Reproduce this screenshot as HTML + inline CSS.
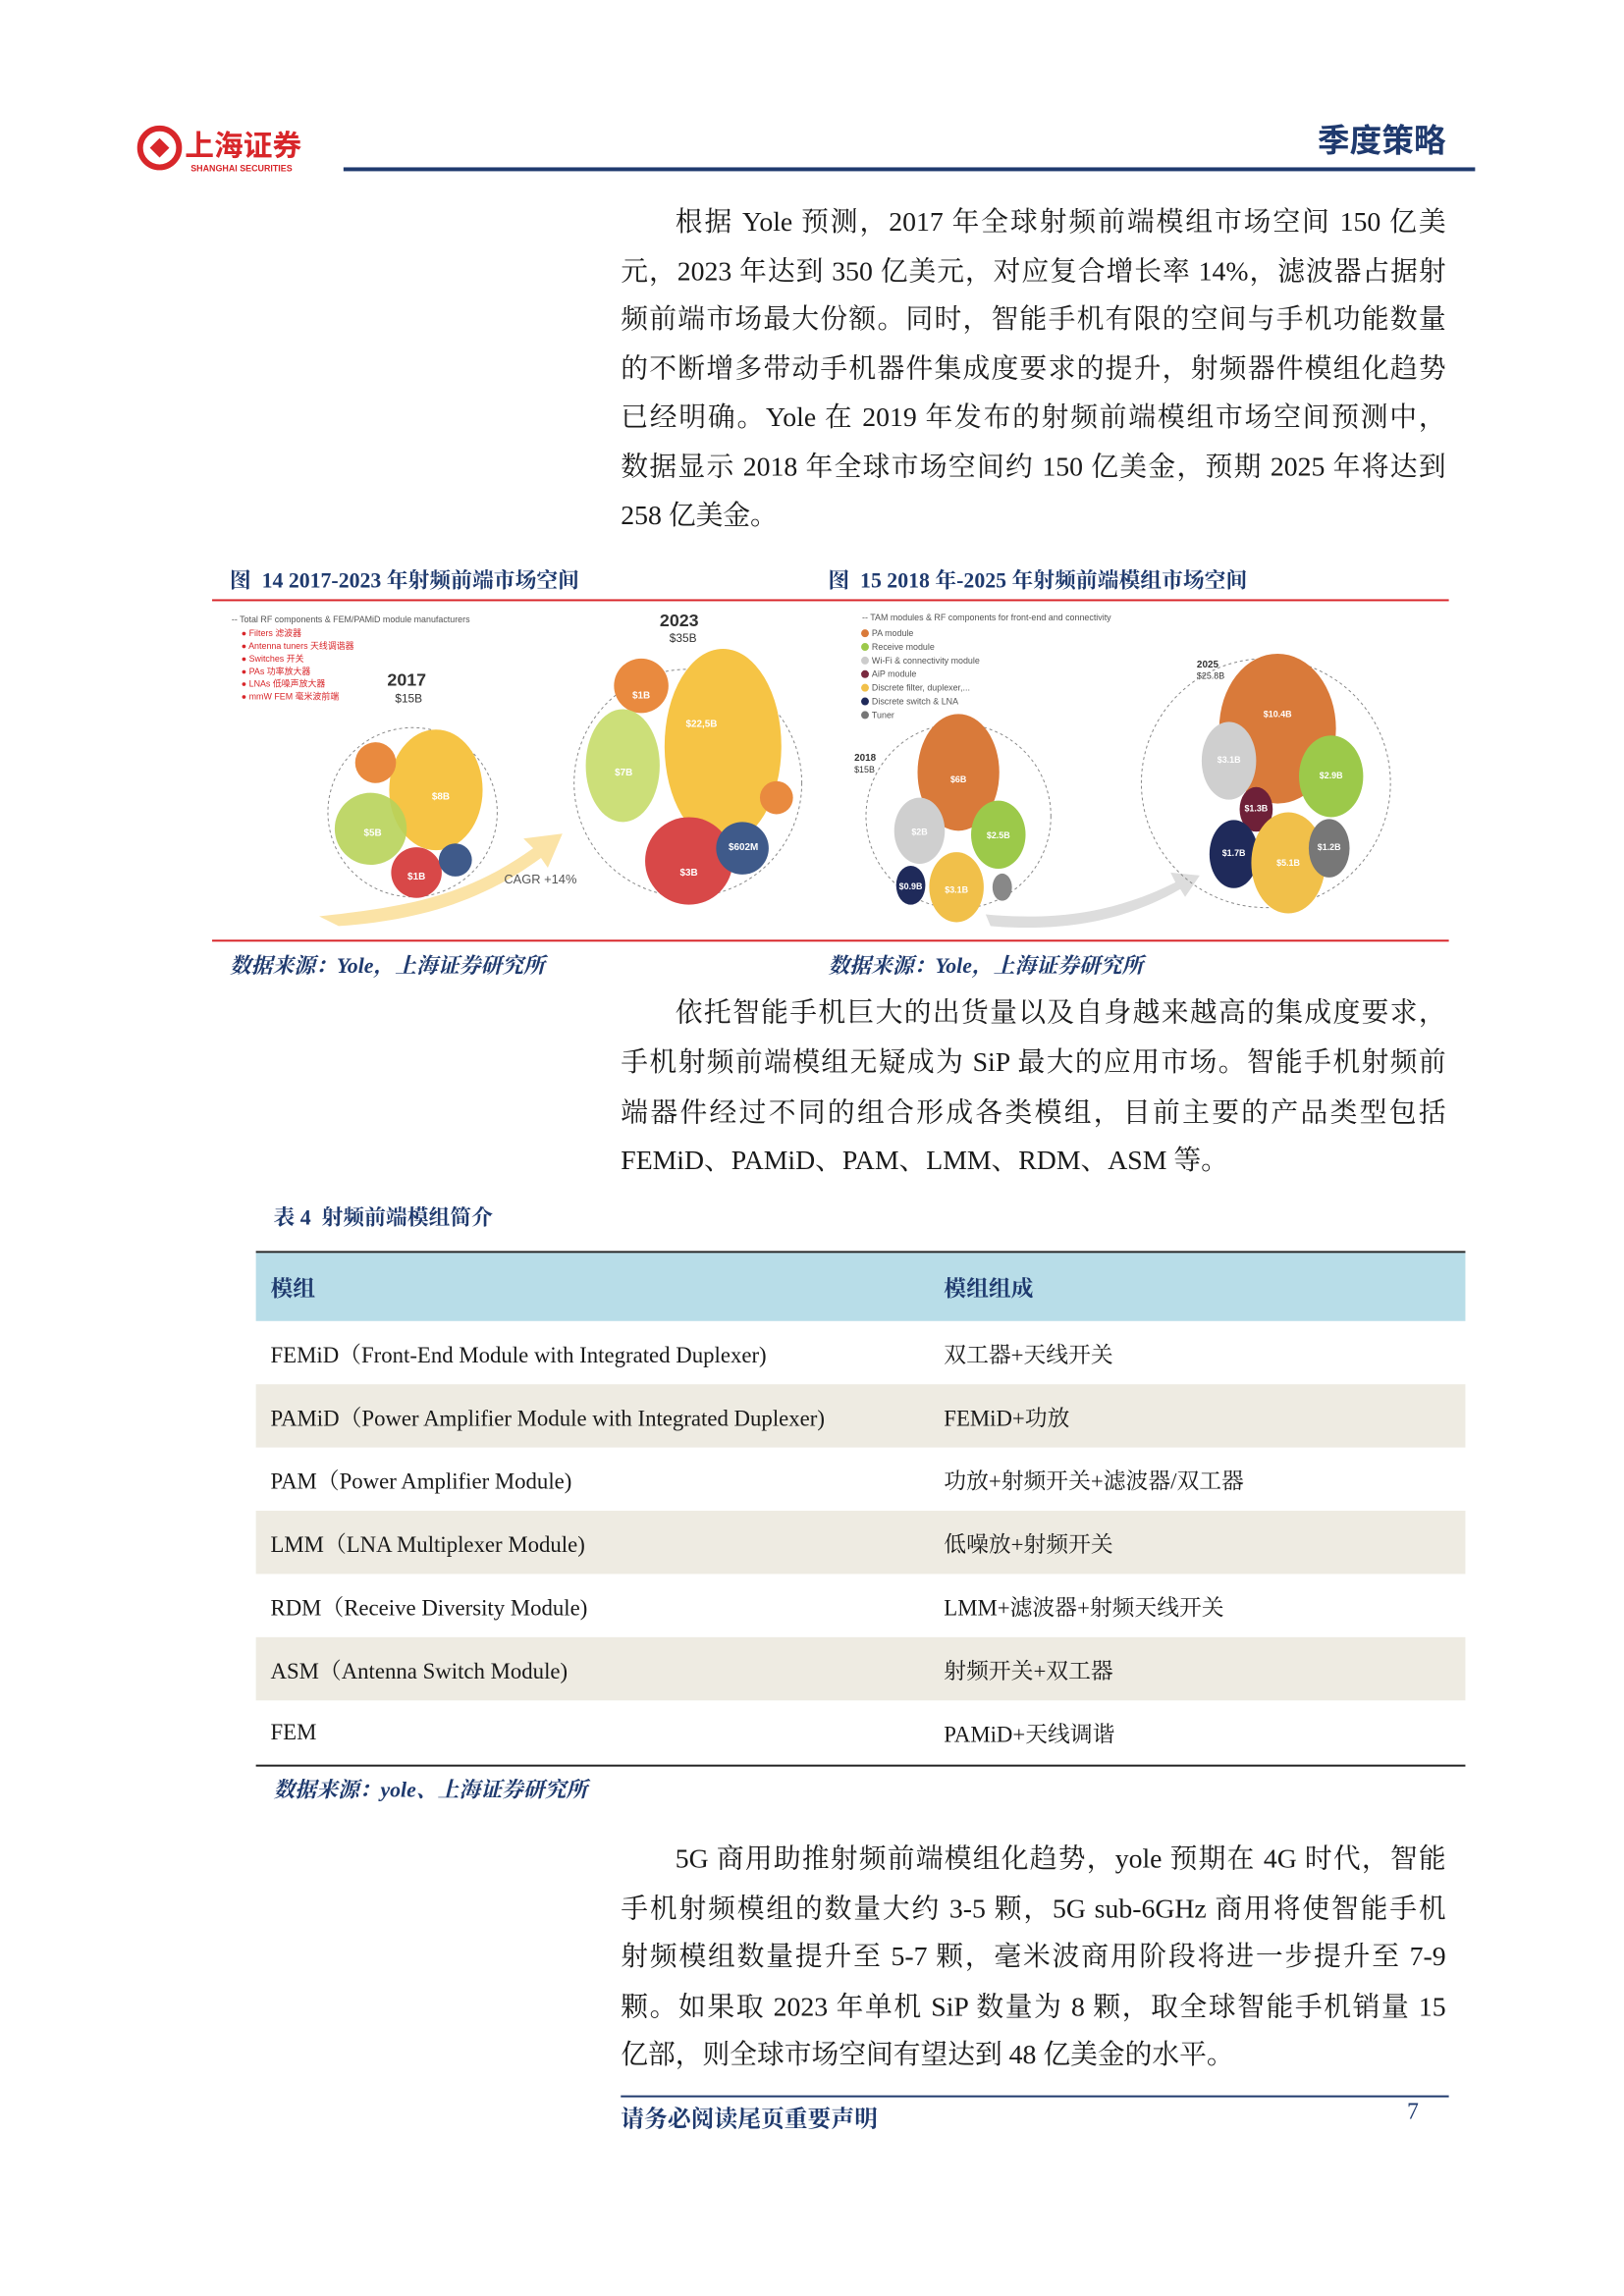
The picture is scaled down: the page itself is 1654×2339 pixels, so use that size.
<!DOCTYPE html>
<html><head><meta charset="utf-8"><style>
body{margin:0;background:#fff;}
#w{width:1654px;height:2339px;overflow:hidden;position:relative;}
#p{position:absolute;left:0;top:0;width:1654px;height:2339px;transform:scale(0.991);transform-origin:0 0;font-family:"Liberation Serif","Noto Serif CJK SC",serif;color:#1a1a1a;}
.a{position:absolute;}
.ln{position:absolute;left:638px;width:848px;font-size:28px;line-height:34px;text-align:justify;text-align-last:justify;white-space:nowrap;}
.ln.l{text-align-last:left;}
.cap{position:absolute;font-size:22px;color:#1f3a6e;font-weight:bold;white-space:nowrap;}
.src{position:absolute;font-size:22px;color:#1f3a6e;font-weight:bold;font-style:italic;white-space:nowrap;}
.row{position:absolute;left:263px;width:1243px;height:65px;font-size:23px;}
.row span{position:absolute;top:50%;transform:translateY(-50%);white-space:nowrap;}
.c1{left:15px}.c2{left:707px}
.sh{background:#eeebe2;}
</style></head><body><div id="w"><div id="p">
<svg class="a" style="left:140px;top:126px" width="190" height="56" viewBox="0 0 190 56">
<circle cx="24" cy="26" r="20" fill="none" stroke="#d8262a" stroke-width="6"/>
<path d="M14 26 L24 16 L34 26 L24 36 Z" fill="#d8262a"/>
<text x="50" y="34" font-size="30" font-weight="bold" fill="#d8262a" font-family="Noto Sans CJK SC,sans-serif">上海证券</text>
<text x="56" y="50" font-size="9" font-weight="bold" fill="#d8262a" font-family="Liberation Sans,sans-serif">SHANGHAI SECURITIES</text>
</svg>
<div class="a" style="right:168px;top:118px;font-size:33px;font-weight:bold;color:#1f3a6e;font-family:'Noto Sans CJK SC',sans-serif;">季度策略</div>
<div class="a" style="left:353px;top:172px;width:1163px;height:4px;background:#1f3a6e"></div>

<div class="ln" style="top:212px;left:694px;width:792px">根据 Yole 预测，2017 年全球射频前端模组市场空间 150 亿美</div>
<div class="ln" style="top:263px">元，2023 年达到 350 亿美元，对应复合增长率 14%，滤波器占据射</div>
<div class="ln" style="top:312px">频前端市场最大份额。同时，智能手机有限的空间与手机功能数量</div>
<div class="ln" style="top:363px">的不断增多带动手机器件集成度要求的提升，射频器件模组化趋势</div>
<div class="ln" style="top:413px">已经明确。Yole 在 2019 年发布的射频前端模组市场空间预测中，</div>
<div class="ln" style="top:464px">数据显示 2018 年全球市场空间约 150 亿美金，预期 2025 年将达到</div>
<div class="ln l" style="top:514px">258 亿美金。</div>

<div class="cap" style="left:236px;top:580px">图 &nbsp;14 2017-2023 年射频前端市场空间</div>
<div class="cap" style="left:851px;top:580px">图 &nbsp;15 2018 年-2025 年射频前端模组市场空间</div>
<div class="a" style="left:218px;top:616px;width:1271px;height:2px;background:#d8262a"></div>

<svg class="a" style="left:218px;top:622px" width="1271" height="336" viewBox="0 0 1271 336" font-family="Liberation Sans,sans-serif">
<g font-size="9" fill="#555"><text x="20" y="18">-- Total RF components &amp; FEM/PAMiD module manufacturers</text></g>
<g font-size="9" fill="#d8262a"><text x="30" y="32">● Filters 滤波器</text><text x="30" y="45">● Antenna tuners 天线调谐器</text><text x="30" y="58">● Switches 开关</text><text x="30" y="71">● PAs 功率放大器</text><text x="30" y="84">● LNAs 低噪声放大器</text><text x="30" y="97">● mmW FEM 毫米波前端</text></g>
<text x="180" y="83" font-size="18" font-weight="bold" fill="#333">2017</text><text x="188" y="100" font-size="12" fill="#333">$15B</text>
<circle cx="206" cy="213" r="87" fill="none" stroke="#888" stroke-dasharray="3,3"/>
<ellipse cx="230" cy="190" rx="48" ry="62" fill="#f6c445"/>
<circle cx="168" cy="162" r="21" fill="#e98a3f"/>
<circle cx="163" cy="230" r="37" fill="#b8d35a" opacity=".9"/>
<circle cx="210" cy="275" r="26" fill="#d84848"/>
<circle cx="250" cy="262" r="17" fill="#3f5a8a"/>
<path d="M110 320 C200 310 260 300 330 250 L320 240 L360 235 L345 270 L338 260 C270 310 200 325 130 330 Z" fill="#fbe3a6"/>
<text x="300" y="286" font-size="13" fill="#555">CAGR +14%</text>
<text x="460" y="22" font-size="18" font-weight="bold" fill="#333">2023</text><text x="470" y="38" font-size="12" fill="#333">$35B</text>
<circle cx="489" cy="183" r="117" fill="none" stroke="#888" stroke-dasharray="3,3"/>
<ellipse cx="525" cy="145" rx="60" ry="100" fill="#f6c445"/>
<circle cx="441" cy="83" r="28" fill="#e98a3f"/>
<ellipse cx="422" cy="165" rx="38" ry="58" fill="#c7db6a" opacity=".9"/>
<circle cx="490" cy="263" r="45" fill="#d84848"/>
<circle cx="545" cy="250" r="27" fill="#3f5a8a"/>
<circle cx="580" cy="198" r="17" fill="#e98a3f"/>
<g font-size="10" font-weight="bold" fill="#fff" text-anchor="middle"><text x="503" y="125">$22,5B</text><text x="423" y="175">$7B</text><text x="490" y="278">$3B</text><text x="546" y="252">$602M</text><text x="441" y="96">$1B</text><text x="210" y="282">$1B</text><text x="165" y="237">$5B</text><text x="235" y="200">$8B</text></g>
<g font-size="9" fill="#555"><text x="668" y="16">-- TAM modules &amp; RF components for front-end and connectivity</text>
<text x="678" y="32">PA module</text><text x="678" y="46">Receive module</text><text x="678" y="60">Wi-Fi &amp; connectivity module</text><text x="678" y="74">AiP module</text><text x="678" y="88">Discrete filter, duplexer,...</text><text x="678" y="102">Discrete switch &amp; LNA</text><text x="678" y="116">Tuner</text></g>
<g><circle cx="671" cy="29" r="4" fill="#d97a3a"/><circle cx="671" cy="43" r="4" fill="#9cc94a"/><circle cx="671" cy="57" r="4" fill="#ccc"/><circle cx="671" cy="71" r="4" fill="#7a2a40"/><circle cx="671" cy="85" r="4" fill="#f1c04a"/><circle cx="671" cy="99" r="4" fill="#1f2a5a"/><circle cx="671" cy="113" r="4" fill="#777"/></g>
<text x="660" y="160" font-size="10" font-weight="bold" fill="#333">2018</text><text x="660" y="172" font-size="9" fill="#333">$15B</text>
<circle cx="767" cy="217" r="95" fill="none" stroke="#888" stroke-dasharray="3,3"/>
<ellipse cx="767" cy="172" rx="42" ry="60" fill="#d97a3a"/>
<ellipse cx="727" cy="232" rx="26" ry="34" fill="#cfcfcf"/>
<ellipse cx="808" cy="236" rx="28" ry="35" fill="#9cc94a"/>
<ellipse cx="765" cy="290" rx="28" ry="36" fill="#f1c04a"/>
<ellipse cx="718" cy="288" rx="15" ry="20" fill="#1f2a5a"/>
<ellipse cx="812" cy="290" rx="10" ry="14" fill="#888"/>
<path d="M795 318 C870 325 930 315 990 285 L985 275 L1015 278 L1000 300 L995 292 C930 330 860 335 800 330 Z" fill="#ddd"/>
<text x="1012" y="64" font-size="10" font-weight="bold" fill="#333">2025</text><text x="1012" y="76" font-size="9" fill="#333">$25.8B</text>
<circle cx="1083" cy="183" r="128" fill="none" stroke="#888" stroke-dasharray="3,3"/>
<ellipse cx="1095" cy="127" rx="60" ry="77" fill="#d97a3a"/>
<ellipse cx="1045" cy="160" rx="28" ry="40" fill="#cfcfcf"/>
<ellipse cx="1150" cy="176" rx="33" ry="42" fill="#9cc94a"/>
<ellipse cx="1073" cy="210" rx="17" ry="23" fill="#6e2038"/>
<ellipse cx="1050" cy="256" rx="25" ry="35" fill="#1f2a5a"/>
<ellipse cx="1106" cy="265" rx="38" ry="52" fill="#f1c04a"/>
<ellipse cx="1148" cy="250" rx="21" ry="30" fill="#777"/>
<g font-size="9" font-weight="bold" fill="#fff" text-anchor="middle"><text x="1095" y="115">$10.4B</text><text x="1045" y="162">$3.1B</text><text x="1150" y="178">$2.9B</text><text x="1073" y="212">$1.3B</text><text x="1050" y="258">$1.7B</text><text x="1106" y="268">$5.1B</text><text x="1148" y="252">$1.2B</text><text x="767" y="182">$6B</text><text x="727" y="236">$2B</text><text x="808" y="240">$2.5B</text><text x="765" y="296">$3.1B</text><text x="718" y="292">$0.9B</text></g>
</svg>

<div class="a" style="left:218px;top:966px;width:1271px;height:2px;background:#d8262a"></div>
<div class="src" style="left:236px;top:976px">数据来源：Yole，上海证券研究所</div>
<div class="src" style="left:851px;top:976px">数据来源：Yole，上海证券研究所</div>

<div class="ln" style="top:1025px;left:694px;width:792px">依托智能手机巨大的出货量以及自身越来越高的集成度要求，</div>
<div class="ln" style="top:1076px">手机射频前端模组无疑成为 SiP 最大的应用市场。智能手机射频前</div>
<div class="ln" style="top:1128px">端器件经过不同的组合形成各类模组，目前主要的产品类型包括</div>
<div class="ln l" style="top:1177px">FEMiD、PAMiD、PAM、LMM、RDM、ASM 等。</div>

<div class="cap" style="left:281px;top:1235px">表 4 &nbsp;射频前端模组简介</div>
<div class="a" style="left:263px;top:1286px;width:1243px;height:2px;background:#222"></div>
<div class="row" style="top:1288px;height:70px;background:#b8dde8;color:#1f3a6e;font-weight:bold"><span class="c1">模组</span><span class="c2">模组组成</span></div>
<div class="row" style="top:1358px"><span class="c1">FEMiD（Front-End Module with Integrated Duplexer)</span><span class="c2">双工器+天线开关</span></div>
<div class="row sh" style="top:1423px"><span class="c1">PAMiD（Power Amplifier Module with Integrated Duplexer)</span><span class="c2">FEMiD+功放</span></div>
<div class="row" style="top:1488px"><span class="c1">PAM（Power Amplifier Module)</span><span class="c2">功放+射频开关+滤波器/双工器</span></div>
<div class="row sh" style="top:1553px"><span class="c1">LMM（LNA Multiplexer Module)</span><span class="c2">低噪放+射频开关</span></div>
<div class="row" style="top:1618px"><span class="c1">RDM（Receive Diversity Module)</span><span class="c2">LMM+滤波器+射频天线开关</span></div>
<div class="row sh" style="top:1683px"><span class="c1">ASM（Antenna Switch Module)</span><span class="c2">射频开关+双工器</span></div>
<div class="row" style="top:1748px"><span class="c1">FEM</span><span class="c2">PAMiD+天线调谐</span></div>
<div class="a" style="left:263px;top:1814px;width:1243px;height:2px;background:#222"></div>
<div class="src" style="left:281px;top:1823px">数据来源：yole、上海证券研究所</div>

<div class="ln" style="top:1895px;left:694px;width:792px">5G 商用助推射频前端模组化趋势，yole 预期在 4G 时代，智能</div>
<div class="ln" style="top:1946px">手机射频模组的数量大约 3-5 颗，5G sub-6GHz 商用将使智能手机</div>
<div class="ln" style="top:1995px">射频模组数量提升至 5-7 颗，毫米波商用阶段将进一步提升至 7-9</div>
<div class="ln" style="top:2047px">颗。如果取 2023 年单机 SiP 数量为 8 颗，取全球智能手机销量 15</div>
<div class="ln l" style="top:2096px">亿部，则全球市场空间有望达到 48 亿美金的水平。</div>

<div class="a" style="left:638px;top:2154px;width:851px;height:2px;background:#1f3a6e"></div>
<div class="a" style="left:638px;top:2158px;font-size:24px;font-weight:bold;color:#1f3a6e">请务必阅读尾页重要声明</div>
<div class="a" style="left:1446px;top:2158px;font-size:24px;color:#1f3a6e">7</div>
</div></div></body></html>
